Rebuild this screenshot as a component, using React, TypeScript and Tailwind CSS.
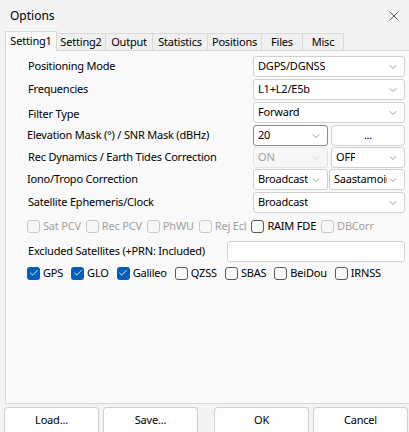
import { ChevronDown, Check, X } from "lucide-react";

const font = { fontFamily: '"Noto Sans", "Open Sans", sans-serif' };

function Select({ value, w, disabled }: { value: string; w: string; disabled?: boolean }) {
  return (
    <div
      className={`${w} h-[21px] flex items-center justify-between pl-[4px] pr-[5px] border rounded-[3px] ${
        disabled ? "border-[#e3e3e3] bg-[#f7f7f7] text-[#a0a0a0]" : "border-[#d0d0d0] bg-white text-black"
      }`}
    >
      <span className="overflow-hidden whitespace-nowrap text-clip">{value}</span>
      <ChevronDown size={12} strokeWidth={1.2} className={`shrink-0 ${disabled ? "text-[#b8b8b8]" : "text-[#606060]"}`} />
    </div>
  );
}

function Box({ checked, label, disabled }: { checked?: boolean; label: string; disabled?: boolean }) {
  return (
    <label className={`flex items-center gap-[3px] whitespace-nowrap ${disabled ? "text-[#a0a0a0]" : "text-black"}`}>
      {checked ? (
        <span className="w-[13px] h-[13px] rounded-[3px] bg-[#005fb8] flex items-center justify-center">
          <Check size={10} strokeWidth={2} className="text-white" />
        </span>
      ) : (
        <span
          className={`w-[13px] h-[13px] rounded-[3px] border ${
            disabled ? "border-[#c8c8c8] bg-[#f7f7f7]" : "border-[#5a5a5a] bg-[#f9f9f9]"
          }`}
        />
      )}
      <span>{label}</span>
    </label>
  );
}

const tabs = ["Setting1", "Setting2", "Output", "Statistics", "Positions", "Files", "Misc"];
const tabW = ["w-[52px]", "w-[49px]", "w-[47px]", "w-[55px]", "w-[54px]", "w-[41px]", "w-[41px]"];

export default function App() {
  return (
    <div
      className="w-[409px] h-[432px] bg-[#f3f3f3] flex flex-col text-[11px] tracking-[-0.2px] whitespace-nowrap overflow-hidden"
      style={font}
    >
      {/* TITLE */}
      <div className="h-[31px] flex items-center justify-between pl-[10px] pr-[7px]">
        <span className="text-[12px] tracking-normal text-black">Options</span>
        <X size={16} strokeWidth={1} className="text-black" />
      </div>

      {/* TABS */}
      <div className="flex items-end h-[20px] pl-[5px]">
        {tabs.map((t, i) => (
          <div
            key={t}
            className={`${tabW[i]} flex items-center justify-center border border-[#d9d9d9] ${
              i === 0
                ? "h-[20px] bg-[#f9f9f9] border-b-0 z-10"
                : "h-[18px] bg-[#f0f0f0] border-l-0 border-b-0"
            }`}
          >
            {t}
          </div>
        ))}
      </div>

      {/* PANEL */}
      <div className="flex-1 ml-[5px] bg-[#f9f9f9] border border-[#d9d9d9] border-r-0 -mt-px pl-[22px] pr-[4px] pt-[5px] flex flex-col">
        <div className="flex flex-col">
          <div className="flex items-center justify-between">
            <span>Positioning Mode</span>
            <Select value="DGPS/DGNSS" w="w-[152px]" />
          </div>
          <div className="flex items-center justify-between mt-[2px]">
            <span>Frequencies</span>
            <Select value="L1+L2/E5b" w="w-[152px]" />
          </div>
          <div className="flex items-center justify-between mt-[2px]">
            <span className="mt-[3px]">Filter Type</span>
            <Select value="Forward" w="w-[152px]" />
          </div>
          <div className="flex items-center justify-between mt-[2px]">
            <span className="-ml-px">Elevation Mask (°) / SNR Mask (dBHz)</span>
            <div className="flex gap-[3px]">
              <div className="w-[75px] h-[21px] flex items-center justify-between pl-[4px] pr-[5px] border border-[#8a8a8a] rounded-[3px] bg-white">
                <span>20</span>
                <ChevronDown size={12} strokeWidth={1.2} className="text-[#606060]" />
              </div>
              <div className="w-[74px] h-[21px] flex items-center justify-center border border-[#d0d0d0] rounded-[4px] bg-[#fdfdfd]">
                ...
              </div>
            </div>
          </div>
          <div className="flex items-center justify-between mt-[1px]">
            <span>Rec Dynamics / Earth Tides Correction</span>
            <div className="flex gap-[3px]">
              <Select value="ON" w="w-[75px]" disabled />
              <Select value="OFF" w="w-[74px]" />
            </div>
          </div>
          <div className="flex items-center justify-between mt-[1px]">
            <span className="-ml-px">Iono/Tropo Correction</span>
            <div className="flex gap-[1px]">
              <Select value="Broadcast" w="w-[75px]" />
              <Select value="Saastamoinen" w="w-[76px]" />
            </div>
          </div>
          <div className="flex items-center justify-between mt-[2px]">
            <span>Satellite Ephemeris/Clock</span>
            <Select value="Broadcast" w="w-[152px]" />
          </div>
        </div>

        <div className="flex items-center gap-[5px] mt-[3px] h-[20px] -ml-[1px]">
          <Box label="Sat PCV" disabled />
          <Box label="Rec PCV" disabled />
          <Box label="PhWU" disabled />
          <Box label="Rej Ecl" disabled />
          <Box label="RAIM FDE" />
          <Box label="DBCorr" disabled />
        </div>

        <div className="flex items-center justify-between mt-[5px]">
          <span>Excluded Satellites (+PRN: Included)</span>
          <div className="w-[178px] h-[21px] border border-[#d0d0d0] rounded-[3px] bg-white" />
        </div>

        <div className="flex items-center gap-[8px] mt-[1px] h-[20px] -ml-[1px]">
          <Box label="GPS" checked />
          <Box label="GLO" checked />
          <Box label="Galileo" checked />
          <Box label="QZSS" />
          <Box label="SBAS" />
          <Box label="BeiDou" />
          <Box label="IRNSS" />
        </div>
      </div>

      {/* BUTTONS */}
      <div className="h-[28px] flex items-end pl-[4px] gap-[4px] pt-[3px]">
        {["Load...", "Save...", "", "OK", "Cancel"].map((b, i) =>
          b === "" ? (
            <div key={i} className="w-[8px]" />
          ) : (
            <div
              key={b}
              className="w-[95px] h-[25px] flex items-center justify-center border border-b-0 border-[#d0d0d0] rounded-t-[4px] bg-[#fdfdfd]"
            >
              {b}
            </div>
          )
        )}
      </div>
    </div>
  );
}
